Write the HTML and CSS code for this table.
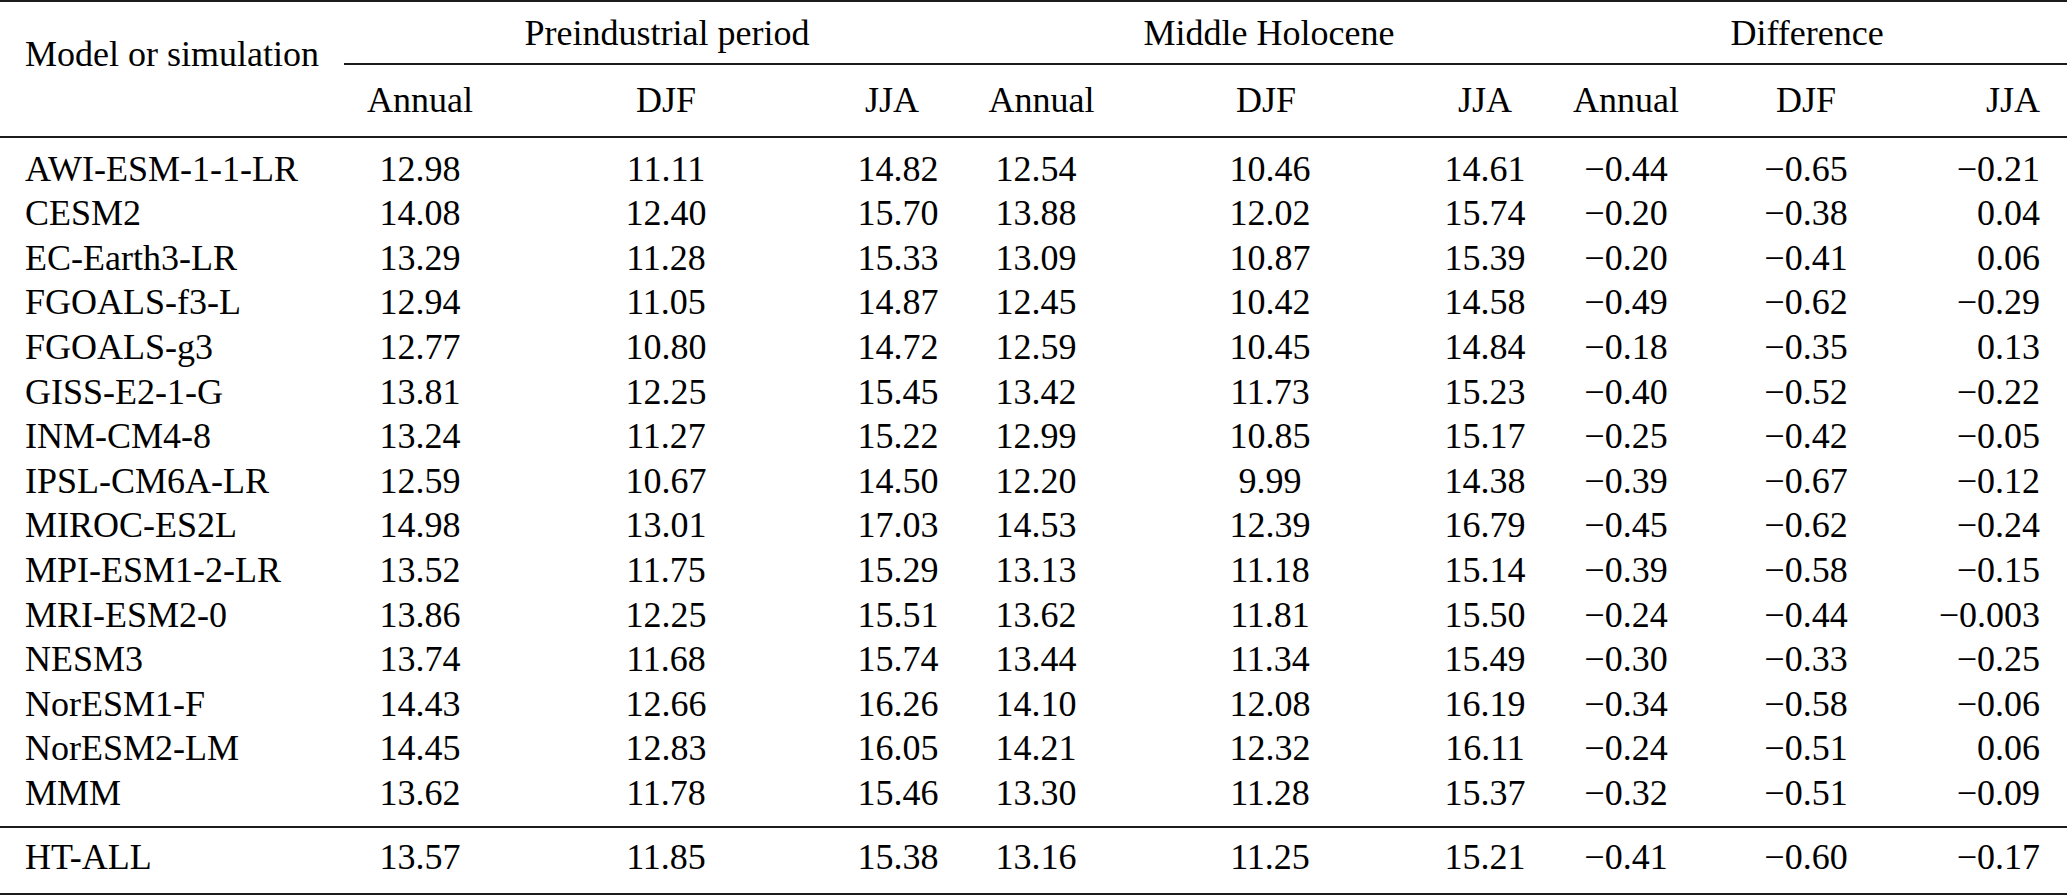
FILE: index.html
```html
<!DOCTYPE html>
<html lang="en">
<head>
<meta charset="utf-8">
<title>Model temperatures</title>
<link rel="stylesheet" href="styles.css">
</head>
<body>
<table class="tbl">
  <colgroup>
    <col class="c-name"><col class="c1"><col class="c2"><col class="c3"><col class="c4"><col class="c5"><col class="c6"><col class="c7"><col class="c8"><col class="c9">
  </colgroup>
  <thead>
    <tr class="groups">
      <th class="corner" rowspan="2">Model or simulation</th>
      <th class="group g-pi" colspan="3">Preindustrial period</th>
      <th class="group g-mh" colspan="3">Middle Holocene</th>
      <th class="group g-diff" colspan="3">Difference</th>
    </tr>
    <tr class="subs">
      <th>Annual</th><th>DJF</th><th class="h-pi-jja">JJA</th>
      <th class="h-mh-ann">Annual</th><th class="h-mh-djf">DJF</th><th>JJA</th>
      <th>Annual</th><th>DJF</th><th class="last">JJA</th>
    </tr>
  </thead>
  <tbody>
    <tr class="first"><td class="name">AWI-ESM-1-1-LR</td><td>12.98</td><td>11.11</td><td>14.82</td><td>12.54</td><td>10.46</td><td>14.61</td><td>−0.44</td><td>−0.65</td><td class="last">−0.21</td></tr>
    <tr><td class="name">CESM2</td><td>14.08</td><td>12.40</td><td>15.70</td><td>13.88</td><td>12.02</td><td>15.74</td><td>−0.20</td><td>−0.38</td><td class="last">0.04</td></tr>
    <tr><td class="name">EC-Earth3-LR</td><td>13.29</td><td>11.28</td><td>15.33</td><td>13.09</td><td>10.87</td><td>15.39</td><td>−0.20</td><td>−0.41</td><td class="last">0.06</td></tr>
    <tr><td class="name">FGOALS-f3-L</td><td>12.94</td><td>11.05</td><td>14.87</td><td>12.45</td><td>10.42</td><td>14.58</td><td>−0.49</td><td>−0.62</td><td class="last">−0.29</td></tr>
    <tr><td class="name">FGOALS-g3</td><td>12.77</td><td>10.80</td><td>14.72</td><td>12.59</td><td>10.45</td><td>14.84</td><td>−0.18</td><td>−0.35</td><td class="last">0.13</td></tr>
    <tr><td class="name">GISS-E2-1-G</td><td>13.81</td><td>12.25</td><td>15.45</td><td>13.42</td><td>11.73</td><td>15.23</td><td>−0.40</td><td>−0.52</td><td class="last">−0.22</td></tr>
    <tr><td class="name">INM-CM4-8</td><td>13.24</td><td>11.27</td><td>15.22</td><td>12.99</td><td>10.85</td><td>15.17</td><td>−0.25</td><td>−0.42</td><td class="last">−0.05</td></tr>
    <tr><td class="name">IPSL-CM6A-LR</td><td>12.59</td><td>10.67</td><td>14.50</td><td>12.20</td><td>9.99</td><td>14.38</td><td>−0.39</td><td>−0.67</td><td class="last">−0.12</td></tr>
    <tr><td class="name">MIROC-ES2L</td><td>14.98</td><td>13.01</td><td>17.03</td><td>14.53</td><td>12.39</td><td>16.79</td><td>−0.45</td><td>−0.62</td><td class="last">−0.24</td></tr>
    <tr><td class="name">MPI-ESM1-2-LR</td><td>13.52</td><td>11.75</td><td>15.29</td><td>13.13</td><td>11.18</td><td>15.14</td><td>−0.39</td><td>−0.58</td><td class="last">−0.15</td></tr>
    <tr><td class="name">MRI-ESM2-0</td><td>13.86</td><td>12.25</td><td>15.51</td><td>13.62</td><td>11.81</td><td>15.50</td><td>−0.24</td><td>−0.44</td><td class="last">−0.003</td></tr>
    <tr><td class="name">NESM3</td><td>13.74</td><td>11.68</td><td>15.74</td><td>13.44</td><td>11.34</td><td>15.49</td><td>−0.30</td><td>−0.33</td><td class="last">−0.25</td></tr>
    <tr><td class="name">NorESM1-F</td><td>14.43</td><td>12.66</td><td>16.26</td><td>14.10</td><td>12.08</td><td>16.19</td><td>−0.34</td><td>−0.58</td><td class="last">−0.06</td></tr>
    <tr><td class="name">NorESM2-LM</td><td>14.45</td><td>12.83</td><td>16.05</td><td>14.21</td><td>12.32</td><td>16.11</td><td>−0.24</td><td>−0.51</td><td class="last">0.06</td></tr>
    <tr class="mean"><td class="name">MMM</td><td>13.62</td><td>11.78</td><td>15.46</td><td>13.30</td><td>11.28</td><td>15.37</td><td>−0.32</td><td>−0.51</td><td class="last">−0.09</td></tr>
  </tbody>
  <tfoot>
    <tr class="all"><td class="name">HT-ALL</td><td>13.57</td><td>11.85</td><td>15.38</td><td>13.16</td><td>11.25</td><td>15.21</td><td>−0.41</td><td>−0.60</td><td class="last">−0.17</td></tr>
  </tfoot>
</table>
</body>
</html>
```
FILE: styles.css
```css
html, body {
  margin: 0;
  padding: 0;
  background: #fff;
}

.tbl {
  border-collapse: separate;
  border-spacing: 0;
  table-layout: fixed;
  width: 2067px;
  font-family: "Liberation Serif", "Times New Roman", serif;
  font-size: 36px;
  line-height: 44.6px;
  color: #000;
}

.c-name { width: 344px; }
.c1 { width: 152px; }
.c2 { width: 340px; }
.c3 { width: 124px; }
.c4 { width: 152px; }
.c5 { width: 316px; }
.c6 { width: 114px; }
.c7 { width: 168px; }
.c8 { width: 192px; }
.c9 { width: 165px; }

.tbl th,
.tbl td {
  padding: 0;
  font-weight: normal;
  text-align: center;
  white-space: nowrap;
}

.tbl .name {
  text-align: left;
  padding-left: 25px;
}

.tbl .last {
  text-align: right;
  padding-right: 27px;
}

/* header: group row */
.tbl .groups th {
  border-top: 2px solid #1c1c1c;
  padding-top: 8.5px;
  padding-bottom: 8px;
}

.tbl .groups th.group {
  border-bottom: 2px solid #1c1c1c;
}

.tbl .groups th.corner {
  text-align: left;
  vertical-align: top;
  padding: 30px 0 0 25px;
  border-bottom: 2px solid #1c1c1c;
}

.tbl .groups .g-pi { padding-left: 30px; }
.tbl .groups .g-mh { padding-left: 36px; }
.tbl .groups .g-diff { padding-left: 5px; }

/* header: sub-column row */
.tbl .subs th {
  padding-top: 12.5px;
  padding-bottom: 14px;
  border-bottom: 2px solid #1c1c1c;
}

.tbl .subs .h-pi-jja { padding-right: 12px; }
.tbl .subs .h-mh-ann { padding-left: 11px; }
.tbl .subs .h-mh-djf { padding-right: 8px; }
.tbl .subs .last { padding-right: 27px; }

/* body */
.tbl .first td {
  padding-top: 8.5px;
}

.tbl .mean td {
  padding-bottom: 10.5px;
  border-bottom: 2px solid #1c1c1c;
}

.tbl .all td {
  padding-top: 6.5px;
  padding-bottom: 14px;
  border-bottom: 2px solid #1c1c1c;
}
```
